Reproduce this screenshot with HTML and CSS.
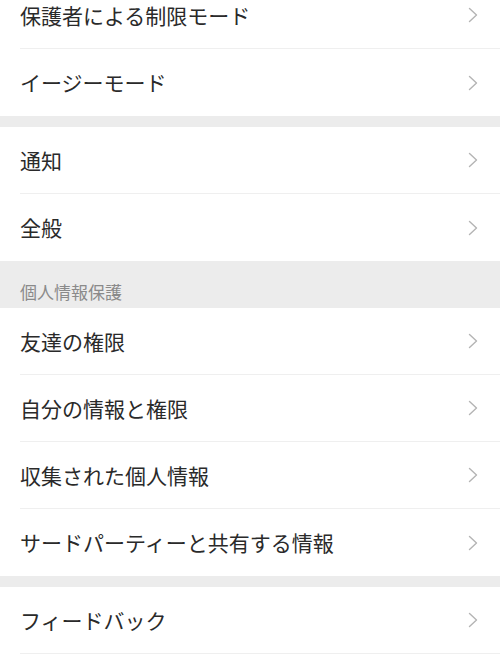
FILE: index.html
```html
<!DOCTYPE html>
<html lang="ja">
<head>
<meta charset="utf-8">
<link rel="stylesheet" href="styles.css">
</head>
<body>
<div class="page">
  <div class="group">
    <div class="row"><span class="label">保護者による制限モード</span><svg class="chev" viewBox="0 0 10 16"><path d="M1.5 1.5 L8.5 8 L1.5 14.5"/></svg></div>
    <div class="row"><span class="label">イージーモード</span><svg class="chev" viewBox="0 0 10 16"><path d="M1.5 1.5 L8.5 8 L1.5 14.5"/></svg></div>
  </div>
  <div class="gap"></div>
  <div class="group">
    <div class="row"><span class="label">通知</span><svg class="chev" viewBox="0 0 10 16"><path d="M1.5 1.5 L8.5 8 L1.5 14.5"/></svg></div>
    <div class="row"><span class="label">全般</span><svg class="chev" viewBox="0 0 10 16"><path d="M1.5 1.5 L8.5 8 L1.5 14.5"/></svg></div>
  </div>
  <div class="header">個人情報保護</div>
  <div class="group">
    <div class="row"><span class="label">友達の権限</span><svg class="chev" viewBox="0 0 10 16"><path d="M1.5 1.5 L8.5 8 L1.5 14.5"/></svg></div>
    <div class="row"><span class="label">自分の情報と権限</span><svg class="chev" viewBox="0 0 10 16"><path d="M1.5 1.5 L8.5 8 L1.5 14.5"/></svg></div>
    <div class="row"><span class="label">収集された個人情報</span><svg class="chev" viewBox="0 0 10 16"><path d="M1.5 1.5 L8.5 8 L1.5 14.5"/></svg></div>
    <div class="row"><span class="label">サードパーティーと共有する情報</span><svg class="chev" viewBox="0 0 10 16"><path d="M1.5 1.5 L8.5 8 L1.5 14.5"/></svg></div>
  </div>
  <div class="gap"></div>
  <div class="group">
    <div class="row sep-last"><span class="label">フィードバック</span><svg class="chev" viewBox="0 0 10 16"><path d="M1.5 1.5 L8.5 8 L1.5 14.5"/></svg></div>
    <div class="row"><span class="label"></span></div>
  </div>
</div>
</body>
</html>
```
FILE: styles.css
```css
html, body {
  margin: 0;
  padding: 0;
  background: #ffffff;
  overflow: hidden;
}
body {
  font-family: "Noto Sans CJK JP", "Noto Sans", sans-serif;
  color: #222222;
}
.page {
  margin-top: -18px;
  display: flex;
  flex-direction: column;
}
.group {
  display: flex;
  flex-direction: column;
  background: #ffffff;
}
.row {
  height: 67px;
  box-sizing: border-box;
  margin-left: 20px;
  padding-right: 22px;
  display: flex;
  align-items: center;
  justify-content: space-between;
  border-bottom: 1px solid #efefef;
}
.row:last-child {
  border-bottom: none;
}
.row.sep-last {
  border-bottom: 1px solid #efefef;
}
.label {
  font-size: 21px;
  line-height: 1;
  letter-spacing: 0;
  color: #2a2a2a;
}
.chev {
  width: 10px;
  height: 16px;
  flex: none;
}
.chev path {
  fill: none;
  stroke: #b4b4b4;
  stroke-width: 1.4;
  stroke-linecap: round;
  stroke-linejoin: round;
}
.gap {
  height: 11px;
  background: #ececec;
}
.header {
  height: 47px;
  background: #ececec;
  padding-left: 20px;
  display: flex;
  align-items: center;
  padding-top: 13px;
  box-sizing: border-box;
  font-size: 17px;
  color: #8a8a8a;
}
```
